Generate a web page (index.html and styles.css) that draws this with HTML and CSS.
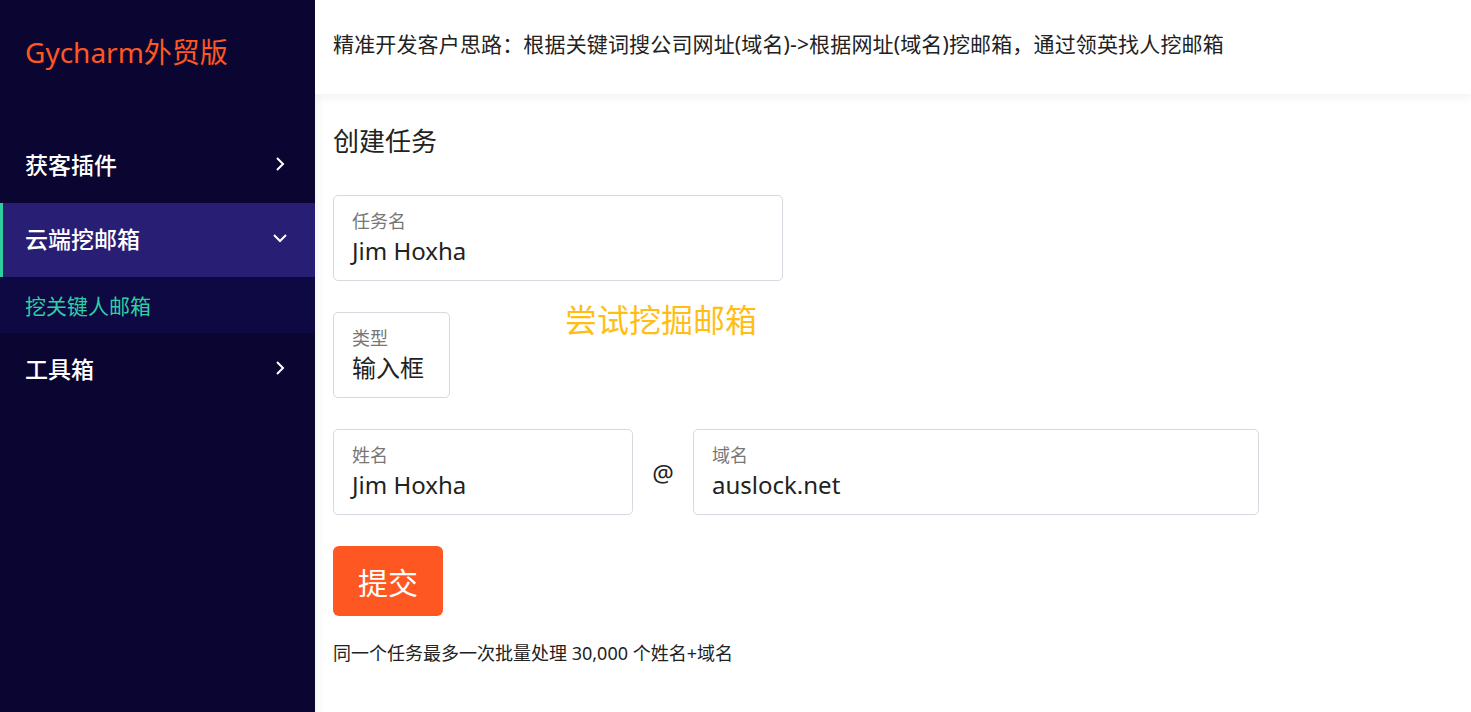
FILE: index.html
```html
<!DOCTYPE html>
<html lang="zh-CN">
<head>
<meta charset="utf-8">
<title>Gycharm外贸版</title>
<link rel="stylesheet" href="styles.css">
</head>
<body>
<div class="app">
  <aside class="sidebar">
    <div class="logo">Gycharm外贸版</div>
    <nav class="menu">
      <div class="menu-item">
        <span>获客插件</span>
        <svg class="chev" width="10" height="16" viewBox="0 0 10 16"><path d="M2 2l6 6-6 6" fill="none" stroke="#fff" stroke-width="2"/></svg>
      </div>
      <div class="menu-item active">
        <span>云端挖邮箱</span>
        <svg class="chev" width="16" height="10" viewBox="0 0 16 10"><path d="M2 2l6 6 6-6" fill="none" stroke="#fff" stroke-width="2"/></svg>
      </div>
      <div class="submenu-item">挖关键人邮箱</div>
      <div class="menu-item">
        <span>工具箱</span>
        <svg class="chev" width="10" height="16" viewBox="0 0 10 16"><path d="M2 2l6 6-6 6" fill="none" stroke="#fff" stroke-width="2"/></svg>
      </div>
    </nav>
  </aside>
  <main class="main">
    <header class="topbar">精准开发客户思路：根据关键词搜公司网址(域名)-&gt;根据网址(域名)挖邮箱，通过领英找人挖邮箱</header>
    <section class="content">
      <h2 class="title">创建任务</h2>
      <div class="field wide">
        <div class="label">任务名</div>
        <div class="value">Jim Hoxha</div>
      </div>
      <div class="row type-row">
        <div class="field small">
          <div class="label">类型</div>
          <div class="value">输入框</div>
        </div>
        <div class="hint">尝试挖掘邮箱</div>
      </div>
      <div class="row">
        <div class="field name">
          <div class="label">姓名</div>
          <div class="value">Jim Hoxha</div>
        </div>
        <div class="at">@</div>
        <div class="field domain">
          <div class="label">域名</div>
          <div class="value">auslock.net</div>
        </div>
      </div>
      <button class="submit">提交</button>
      <p class="note">同一个任务最多一次批量处理 30,000 个姓名+域名</p>
    </section>
  </main>
</div>
</body>
</html>
```
FILE: styles.css
```css
* { box-sizing: border-box; }
html, body { margin: 0; padding: 0; height: 100%; }
body {
  font-family: "Noto Sans", "Noto Sans CJK SC", sans-serif;
  color: #222;
  background: #fff;
  overflow: hidden;
}
.app { display: flex; height: 712px; }
.sidebar {
  width: 315px;
  flex: none;
  background: #0b0631;
  color: #fff;
  position: relative;
  z-index: 2;
}
.logo {
  height: 129px;
  padding: 32px 0 0 25px;
  font-size: 28px;
  color: #ff5722;
  line-height: 40px;
}
.menu-item {
  height: 74px;
  display: flex;
  align-items: center;
  justify-content: space-between;
  padding: 0 30px 4px 25px;
  font-size: 23px;
  font-weight: 500;
}
.menu-item.active {
  background: #281e74;
  border-left: 3px solid #2ecc9e;
  padding-left: 22px;
  padding-right: 27px;
}
.chev { display: block; }
.submenu-item {
  height: 56px;
  background: #0f0943;
  color: #2ecfa4;
  font-size: 21px;
  display: flex;
  align-items: center;
  padding-left: 25px;
}
.main {
  flex: 1;
  display: flex;
  flex-direction: column;
  box-shadow: inset 10px 0 10px -8px rgba(0,0,0,0.06);
}
.topbar {
  height: 94px;
  display: flex;
  align-items: center;
  padding: 0 18px 9px;
  font-size: 21px;
  letter-spacing: 0.15px;
  color: #222;
  background: #fff;
  box-shadow: 0 4px 10px rgba(0,0,0,0.05);
  position: relative;
  z-index: 1;
}
.content { padding: 26px 18px 0; }
.title {
  margin: 0;
  font-size: 26px;
  font-weight: 400;
  line-height: 42px;
  color: #222;
}
.field {
  border: 1px solid #d6d9e0;
  border-radius: 5px;
  height: 86px;
  padding: 12px 18px 0;
  background: #fff;
}
.field.wide { width: 450px; margin-top: 33px; }
.field.small { width: 117px; }
.field.name { width: 300px; }
.field.domain { width: 566px; }
.label { font-size: 18px; color: #777; line-height: 26px; }
.value { font-size: 24px; color: #222; line-height: 34px; }
.row { display: flex; align-items: center; margin-top: 31px; }
.type-row { align-items: flex-start; }
.hint {
  margin-left: 115px;
  margin-top: -14px;
  font-size: 32px;
  color: #ffbe16;
  line-height: 44px;
}
.at { width: 60px; text-align: center; font-size: 24px; color: #222; }
.submit {
  display: block;
  margin-top: 31px;
  width: 110px;
  height: 70px;
  border: 0;
  border-radius: 6px;
  background: #ff5722;
  color: #fff;
  font-family: inherit;
  font-size: 30px;
  padding: 0;
}
.note { margin: 25px 0 0; font-size: 18px; color: #222; line-height: 24px; }
```
